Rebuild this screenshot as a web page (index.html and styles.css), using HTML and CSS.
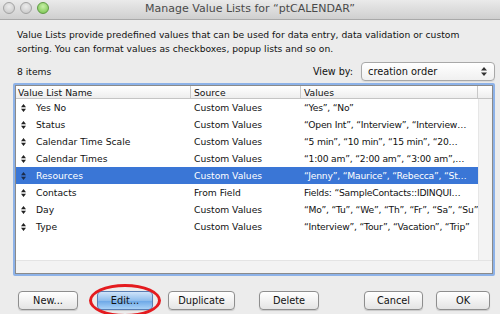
FILE: index.html
```html
<!DOCTYPE html>
<html lang="en">
<head>
  <meta charset="UTF-8" />
  <title>Manage Value Lists</title>
  <link rel="stylesheet" href="styles.css">
</head>
<body>
  <div class="window">
    <div class="titlebar">
      <div class="lights">
        <span class="light"></span>
        <span class="light"></span>
        <span class="light green"></span>
      </div>
      <div class="title">Manage Value Lists for “ptCALENDAR”</div>
    </div>

    <div class="content">
      <p class="desc">Value Lists provide predefined values that can be used for data entry, data validation or custom sorting. You can format values as checkboxes, popup lists and so on.</p>

      <div class="toolbar">
        <span class="count">8 items</span>
        <label class="viewby">View by:</label>
        <div class="select">
          <span>creation order</span>
          <svg class="updown" width="6" height="9" viewBox="0 0 6 9"><path d="M3 0 L6 3.5 H0 Z M3 9 L6 5.5 H0 Z" fill="#333"/></svg>
        </div>
      </div>

      <div class="ring">
        <div class="list">
          <div class="head">
            <div class="cell c-name">Value List Name</div>
            <div class="cell c-src">Source</div>
            <div class="cell c-val">Values</div>
            <div class="cell c-gut"></div>
          </div>
          <div class="body">
            <div class="rows" id="rows"></div>
            <div class="gutter"></div>
          </div>
          <div class="hscroll"></div>
        </div>
      </div>

      <div class="buttons">
        <button class="btn b-new">New...</button>
        <div class="edit-wrap">
          <button class="btn b-edit default">Edit...</button>
          <span class="circle"></span>
        </div>
        <button class="btn b-dup">Duplicate</button>
        <button class="btn b-del">Delete</button>
        <button class="btn b-cancel">Cancel</button>
        <button class="btn b-ok">OK</button>
      </div>
    </div>
  </div>

  <script>
    const lists = [
      { name: "Yes No", src: "Custom Values", val: "“Yes”, “No”" },
      { name: "Status", src: "Custom Values", val: "“Open Int”, “Interview”, “Interview…" },
      { name: "Calendar Time Scale", src: "Custom Values", val: "“5 min”, “10 min”, “15 min”, “20…" },
      { name: "Calendar Times", src: "Custom Values", val: "“1:00 am”, “2:00 am”, “3:00 am”,…" },
      { name: "Resources", src: "Custom Values", val: "“Jenny”, “Maurice”, “Rebecca”, “St…", sel: true },
      { name: "Contacts", src: "From Field", val: "Fields: “SampleContacts::IDINQUI…" },
      { name: "Day", src: "Custom Values", val: "“Mo”, “Tu”, “We”, “Th”, “Fr”, “Sa”, “Su”" },
      { name: "Type", src: "Custom Values", val: "“Interview”, “Tour”, “Vacation”, “Trip”" }
    ];

    const rows = document.getElementById("rows");
    lists.forEach(l => {
      const div = document.createElement("div");
      div.className = "row" + (l.sel ? " selected" : "");
      div.innerHTML = `<div class="cell c-name"><svg class="grip" width="5" height="8" viewBox="0 0 5 8"><path d="M2.5 0 L5 3.3 H0 Z M2.5 8 L5 4.7 H0 Z"/></svg><span>${l.name}</span></div>`
        + `<div class="cell c-src">${l.src}</div><div class="cell c-val">${l.val}</div>`;
      rows.appendChild(div);
    });
  </script>
</body>
</html>
```

FILE: styles.css
```css
* { box-sizing: border-box; margin: 0; padding: 0; }

body {
  width: 500px;
  height: 314px;
  overflow: hidden;
  background: #ececec;
  font-family: "DejaVu Sans", sans-serif;
  font-size: 9.2px;
  color: #111;
}

.window { height: 314px; }

.titlebar {
  height: 20px;
  position: relative;
  background: linear-gradient(#eaeaea, #cfcfcf);
  border-bottom: 1px solid #a9a9a9;
  text-align: center;
}

.lights {
  position: absolute;
  left: 3px;
  top: 2px;
  display: flex;
  gap: 5px;
}

.light {
  width: 12px;
  height: 12px;
  border-radius: 50%;
  background: radial-gradient(circle at 50% 35%, #ececec, #c4c4c4);
  border: 1px solid #a3a3a3;
}

.light.green {
  background: radial-gradient(circle at 50% 35%, #c8f0a8, #71c046);
  border-color: #5f9a45;
}

.title {
  font-size: 11px;
  line-height: 18px;
  color: #4a4a4a;
}

.content { padding: 0 5px 0 13px; }

.desc {
  padding: 8px 0 0 4px;
  line-height: 14px;
  width: 470px;
}

.toolbar {
  display: flex;
  align-items: center;
  height: 20px;
  margin-top: 5px;
  padding-left: 4px;
}

.count { flex: 1; }

.viewby { margin-right: 8px; font-size: 9.6px; }

.select {
  width: 134px;
  height: 19px;
  border: 1px solid #a8a8a8;
  border-radius: 4px;
  background: linear-gradient(#ffffff, #f0f0f0);
  display: flex;
  align-items: center;
  justify-content: space-between;
  padding: 0 7px 0 6px;
  font-size: 9.8px;
  box-shadow: 0 1px 1px rgba(0,0,0,0.08);
}

.ring {
  margin-top: 2px;
  width: 482px;
  height: 193px;
  border: 2px solid #8db2e8;
  border-radius: 2px;
}

.list {
  height: 100%;
  border: 1px solid #8a8a8a;
  background: #fff;
  display: flex;
  flex-direction: column;
}

.cell {
  white-space: nowrap;
  overflow: hidden;
}

.c-name { width: 175px; }
.c-src { width: 110px; }
.c-val { width: 177px; }
.c-gut { flex: 1; }

.head {
  display: flex;
  height: 13px;
  background: linear-gradient(#ffffff, #ededed);
  border-bottom: 1px solid #c4c4c4;
  line-height: 13px;
}

.head .cell {
  padding-left: 3px;
  border-right: 1px solid #c8c8c8;
}

.head .c-name { padding-left: 2px; }
.head .c-gut { border-right: none; }

.body {
  flex: 1;
  display: flex;
}

.rows { width: 462px; }

.gutter {
  flex: 1;
  background: #f3f3f3;
  border-left: 1px solid #e6e6e6;
}

.row {
  display: flex;
  height: 17px;
  line-height: 17px;
}

.row .cell { padding-left: 3px; }

.row .c-val { letter-spacing: -0.2px; }

.row .c-name {
  display: flex;
  align-items: center;
  padding-left: 5px;
}

.grip {
  fill: #222;
  margin-right: 10px;
}

.row.selected {
  background: #3a76d6;
  color: #fff;
}

.row.selected .grip { fill: #1c2c4a; }

.hscroll {
  height: 13px;
  background: #f3f3f3;
  border-top: 1px solid #e4e4e4;
}

.buttons {
  display: flex;
  margin-top: 15px;
}

.btn {
  height: 19px;
  border: 1px solid #8e8e8e;
  border-radius: 4px;
  background: linear-gradient(#ffffff, #f2f2f2 50%, #e4e4e4);
  font-family: "DejaVu Sans", sans-serif;
  font-size: 9.8px;
  color: #111;
  box-shadow: 0 1px 1px rgba(0,0,0,0.15);
}

.b-new { width: 60px; margin-left: 5px; }
.edit-wrap { position: relative; margin-left: 19px; }
.b-edit { width: 56px; }
.b-dup { width: 67px; margin-left: 15px; }
.b-del { width: 60px; margin-left: 24px; }
.b-cancel { width: 59px; margin-left: 45px; }
.b-ok { width: 54px; margin-left: 13px; }

.btn.default {
  background: linear-gradient(#cfe4fa, #8fbdec 50%, #6aa6e6 51%, #a9d2f7);
  border-color: #5a7fb3;
}

.circle {
  position: absolute;
  left: -8px;
  top: -7px;
  width: 72px;
  height: 33px;
  border: 3px solid #e41b1f;
  border-radius: 50%;
}
```
